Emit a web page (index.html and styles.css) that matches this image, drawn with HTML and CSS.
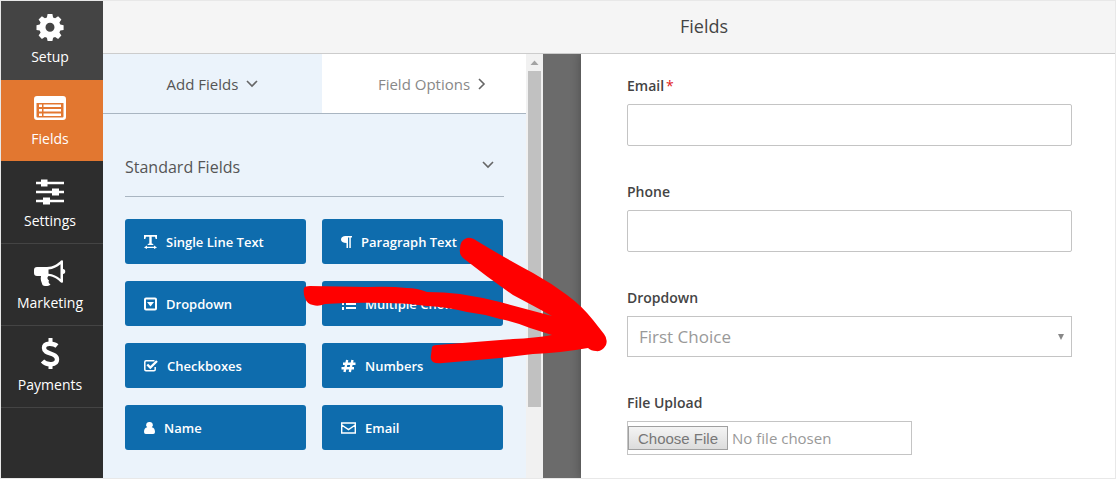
FILE: index.html
```
<!DOCTYPE html>
<html lang="en">
<head>
    <meta charset="UTF-8">
    <meta name="viewport" content="width=device-width, initial-scale=1.0">
    <title>Form Builder</title>
    <link rel="stylesheet" href="styles.css">
</head>
<body>
    <div class="builder">
        <nav class="sidebar">
            <button class="setup" type="button">
                <svg width="28" height="28" viewBox="0 0 28 28"><path fill="#fff" fill-rule="evenodd" d="M11.600 1h4.800l.7 3.400 2 .9 3-2 3.300 3.300-2 3 .9 2 3.300.7v4.600l-3.300.7-.9 2 2 3-3.300 3.300-3-2-2 .9-.7 3.200h-4.800l-.7-3.200-2-.9-3 2-3.300-3.300 2-3-.9-2L.5 16.900v-4.600l3.200-.7.9-2-2-3 3.300-3.300 3 2 2-.9zM14 9.800a4.500 4.500 0 1 0 0 9a4.500 4.500 0 1 0 0-9z"/></svg>
                Setup
            </button>
            <button class="active" type="button">
                <svg width="32" height="28" viewBox="0 0 32 28"><path fill="#fff" fill-rule="evenodd" d="M3 1h26a3 3 0 0 1 3 3v18a3 3 0 0 1-3 3H3a3 3 0 0 1-3-3V4a3 3 0 0 1 3-3zM2.500 8v13.500q0 1 1 1h25q1 0 1-1V8z"/><path fill="#fff" d="M5 9.500h3V12H5zm4.500 0H27V12H9.500zM5 14h3v2.500H5zm4.500 0H27v2.500H9.500zM5 18.500h3V21H5zm4.500 0H27V21H9.500z"/></svg>
                Fields
            </button>
            <button type="button">
                <svg width="28" height="28" viewBox="0 0 28 28"><path stroke="#fff" stroke-width="2.500" d="M0 6h28M0 15h28M0 24h28"/><path fill="#fff" d="M5 2.500h6.500v7H5zM16 11.500h7v7h-7zM7 20.500h7v7H7z"/></svg>
                Settings
            </button>
            <button type="button">
                <svg width="32" height="28" viewBox="0 0 32 28"><path fill="#fff" fill-rule="evenodd" d="M3 8h10c6 0 11-3.500 14-6.500q2-1 2 1V10c3 0 3 5 0 5v7.500q0 2-2 1c-3-3-7-6-12.500-6.500-2 1.500-1 3 .5 4.500-.8 1.500-.5 2.500 1.500 4-2 2-6.500 2-8 .5-1-3-2.500-5.500-1.500-9H3q-3 0-3-3v-3q0-3 3-3zM14.500 10.500v4.300c4.500.3 8.700 2.500 12 5.200V5.300c-3.300 2.700-7.500 4.900-12 5.200z"/></svg>
                Marketing
            </button>
            <button type="button">
                <svg width="24" height="32" viewBox="0 0 24 32"><path fill="none" stroke="#fff" stroke-width="4.400" d="M19 9c-3-2.600-13-4-13 2 0 7 13 4 13 11.500 0 6-10.500 6-14.500 1.500"/><path stroke="#fff" stroke-width="4" d="M12.500 1v6M12.500 26v6"/></svg>
                Payments
            </button>
        </nav>

        <div class="main">
            <header class="toolbar"><h1>Fields</h1></header>
            <div class="workspace">
                <section class="panel">
                    <div class="tabs">
                        <button class="tab active" type="button">Add Fields <svg width="12" height="12" viewBox="0 0 12 12"><path d="M1 3l5 5 5-5"/></svg></button>
                        <button class="tab" type="button">Field Options <svg width="8" height="12" viewBox="0 0 8 12"><path d="M1 1l5 5-5 5"/></svg></button>
                    </div>
                    <div class="group">
                        <h2>Standard Fields <svg width="12" height="12" viewBox="0 0 12 12"><path d="M1 1l5 5 5-5"/></svg></h2>
                        <div class="field-buttons">
                            <button type="button"><svg width="13" height="14" viewBox="0 0 13 14"><path fill="#fff" d="M0 0h13v4h-1.300L11 1.800H7.700v6.700l1.600.5v1H3.700V9l1.600-.5V1.800H2L1.300 4H0zM3 11.700h7V10.500l3 1.900-3 1.600v-1H3v1l-3-1.600 3-1.900z"/></svg>Single Line Text</button>
                            <button type="button"><svg width="11" height="14" viewBox="0 0 11 14"><path fill="#fff" d="M4.500 1H11v1.500H9.800V13H8.300V2.500H7V13H5.500V8C2 8 0 6.500 0 4.500S2 1 4.500 1z"/></svg>Paragraph Text</button>
                            <button type="button"><svg width="13" height="14" viewBox="0 0 13 14"><rect x="1" y="1.500" width="11" height="11" rx="1" fill="none" stroke="#fff" stroke-width="2"/><path fill="#fff" d="M3 5h7L6.500 9.500z"/></svg>Dropdown</button>
                            <button type="button"><svg width="15" height="14" viewBox="0 0 15 14"><path fill="#fff" d="M5 2h10v2H5zm0 4h10v2H5zm0 4h10v2H5zM1 1h2v3H1zm0 4h2v3H1zm0 5h2v3H1z"/></svg>Multiple Choice</button>
                            <button type="button"><svg width="14" height="14" viewBox="0 0 14 14"><path fill="none" stroke="#fff" stroke-width="1.500" d="M10.500 1.800H2q-1.200 0-1.200 1.200v7.500q0 1.200 1.200 1.200h8q1.200 0 1.200-1.200V8"/><path fill="none" stroke="#fff" stroke-width="2.400" d="M3.300 5.500l3 3L13 2"/></svg>Checkboxes</button>
                            <button type="button"><svg width="15" height="14" viewBox="0 0 15 14"><path stroke="#fff" stroke-width="2.400" d="M6.200 1L3.500 13M11.500 1L8.800 13M2 4.800h12.500M.5 9.200H13"/></svg>Numbers</button>
                            <button type="button"><svg width="11" height="14" viewBox="0 0 11 14"><path fill="#fff" d="M5.500 1a3 3 0 0 1 2.300 5.300C10 6.500 11 8.500 11 11q0 2-1.800 2H1.800Q0 13 0 11c0-2.500 1-4.500 3.200-4.700A3 3 0 0 1 5.500 1z"/></svg>Name</button>
                            <button type="button"><svg width="15" height="14" viewBox="0 0 15 14"><path fill="none" stroke="#fff" stroke-width="1.400" d="M.7 2h13.600v10H.7zM.7 4l6.800 4.700L14.300 4"/></svg>Email</button>
                        </div>
                    </div>
                </section>
                <div class="scrollbar">
                    <svg width="17" height="17" viewBox="0 0 17 17"><path fill="#a3a3a3" d="M4.500 11h8l-4-4.500z"/></svg>
                    <div class="thumb"></div>
                </div>
                <form class="preview">
                    <div class="row">
                        <label for="email">Email<span class="required">*</span></label>
                        <input type="text" id="email">
                    </div>
                    <div class="row">
                        <label for="phone">Phone</label>
                        <input type="text" id="phone">
                    </div>
                    <div class="row">
                        <label for="choice">Dropdown</label>
                        <select id="choice">
                            <option>First Choice</option>
                        </select>
                    </div>
                    <div class="row">
                        <label for="upload">File Upload</label>
                        <input type="file" id="upload">
                    </div>
                </form>
            </div>
        </div>

        <!-- hand drawn arrow pointing from the buttons to the form -->
        <svg class="arrow" width="320" height="140" viewBox="300 230 320 140"><path fill="#f00" d="M467 238Q471 237 477 241Q505 258 533 273Q551 283 567 295Q582 306 593 320L604 334Q608 339 606 345Q602 352 596 351Q591 351 588 348Q560 353 533 354L500 358L443 363Q436 364 433 362Q430 360 431 355L432 347Q433 345 437 345L513 339Q535 338 552 335L530 328Q515 322 500 319Q484 314 467 312Q447 307 427 306Q407 303 387 303Q355 302 325 304Q318 307 313 305Q307 304 305 298Q303 293 304 288Q305 286 310 286L367 287Q390 286 407 288Q417 288 427 292Q444 292 460 294Q480 297 500 302L552 316Q532 305 513 295Q487 277 463 258Q459 254 460 249Q460 240 467 238Z"/></svg>
    </div>
</body>
</html>
```
FILE: styles.css
```
* {
    box-sizing: border-box;
}
body {
    margin: 0;
    font-family: "Open Sans", "Noto Sans", sans-serif;
    font-size: 14px;
    color: #444;
}
button {
    border: 0;
    font-family: inherit;
    cursor: pointer;
}
h1, h2 {
    margin: 0;
    font-weight: normal;
}
.builder {
    position: relative;
    display: flex;
    height: 100vh;
    border: 1px solid #e8e8e8;
    overflow: hidden;
}

/* left navigation */
.sidebar {
    width: 102px;
    flex-shrink: 0;
    background: #2d2d2d;
}
.sidebar button {
    display: flex;
    flex-direction: column;
    align-items: center;
    justify-content: flex-end;
    gap: 6px;
    width: 100%;
    height: 82px;
    padding: 0 4px 12px 0;
    border-bottom: 1px solid #444;
    background: #2d2d2d;
    color: #fff;
    font-size: 14px;
    line-height: 20px;
}
.sidebar .setup {
    height: 79px;
    background: #444;
}
.sidebar .active {
    background: #e27730;
    border-color: #2d2d2d;
}

.main {
    flex: 1;
    min-width: 0;
    display: flex;
    flex-direction: column;
}
.toolbar {
    height: 53px;
    flex-shrink: 0;
    border-bottom: 1px solid #ccc;
    background: #f5f5f5;
    text-align: center;
}
.toolbar h1 {
    padding-left: 190px;
    font-size: 18px;
    line-height: 50px;
}
.workspace {
    flex: 1;
    min-height: 0;
    display: flex;
    background: #6b6b6b;
    overflow: hidden;
}

/* fields panel */
.panel {
    width: 423px;
    flex-shrink: 0;
    background: #ebf3fb;
}
.tabs {
    display: flex;
    border-bottom: 1px solid #a9b5c1;
}
.tab {
    flex: 1;
    display: flex;
    align-items: center;
    justify-content: center;
    gap: 8px;
    height: 59px;
    padding: 0 0 0 16px;
    background: #fff;
    color: #888;
    font-size: 15px;
}
.tab.active {
    flex: 0 0 219px;
    padding: 0;
    background: #ebf3fb;
    color: #555;
}
.tab svg, h2 svg {
    fill: none;
    stroke: #666;
    stroke-width: 1.6;
}
.group {
    padding: 32px 22px 0;
}
.group h2 {
    display: flex;
    align-items: center;
    justify-content: space-between;
    height: 51px;
    padding: 0 10px 8px 0;
    border-bottom: 1px solid #a9b5c1;
    color: #555;
    font-size: 16px;
}
.field-buttons {
    display: grid;
    grid-template-columns: 1fr 1fr;
    gap: 17px 16px;
    margin: 22px 1px 0 0;
}
.field-buttons button {
    display: flex;
    align-items: center;
    gap: 9px;
    height: 45px;
    padding: 0 19px;
    border-radius: 3px;
    background: #0e6cad;
    color: #fff;
    font-size: 13px;
    font-weight: 600;
}
.scrollbar {
    width: 17px;
    flex-shrink: 0;
    margin-right: 38px;
    padding: 0 2px;
    background: #f1f1f1;
}
.scrollbar svg {
    display: block;
    margin-left: -2px;
}
.thumb {
    height: calc(80% - 3px);
    background: #c1c1c1;
}

/* form preview */
.preview {
    flex: 1;
    display: flex;
    flex-direction: column;
    gap: 34px;
    padding: 20px 43px 0 46px;
    background: #fff;
    box-shadow: 0 0 10px rgba(0, 0, 0, 0.3);
}
.row {
    display: flex;
    flex-direction: column;
    gap: 6px;
}
.row label {
    font-size: 14px;
    font-weight: 600;
    line-height: 24px;
}
.required {
    margin-left: 2px;
    color: #e02020;
    font-weight: normal;
}
.row input, .row select {
    height: 42px;
    padding: 0 11px;
    border: 1px solid #c4c4c4;
    border-radius: 2px;
    background: #fff;
    color: #999;
    font-family: inherit;
    font-size: 17px;
}
.row select {
    height: 41px;
    border-radius: 0;
    appearance: none;
    background: #fff url("data:image/svg+xml,%3Csvg xmlns='http://www.w3.org/2000/svg' width='6' height='6'%3E%3Cpath fill='%23888' d='M0 0h6L3 6z'/%3E%3C/svg%3E") no-repeat right 7px center;
}
.row input[type="file"] {
    width: 285px;
    height: 34px;
    padding: 4px 0;
    border-radius: 0;
    font-size: 15px;
}
.row input::file-selector-button {
    height: 24px;
    margin: 0 4px 0 0;
    padding: 0 9px;
    border: 1px solid #a0a0a0;
    background: linear-gradient(#f4f4f4, #dcdcdc);
    color: #777;
    font-family: "Liberation Sans", sans-serif;
    font-size: 15px;
}

.arrow {
    position: absolute;
    left: 299px;
    top: 229px;
    pointer-events: none;
}
```
